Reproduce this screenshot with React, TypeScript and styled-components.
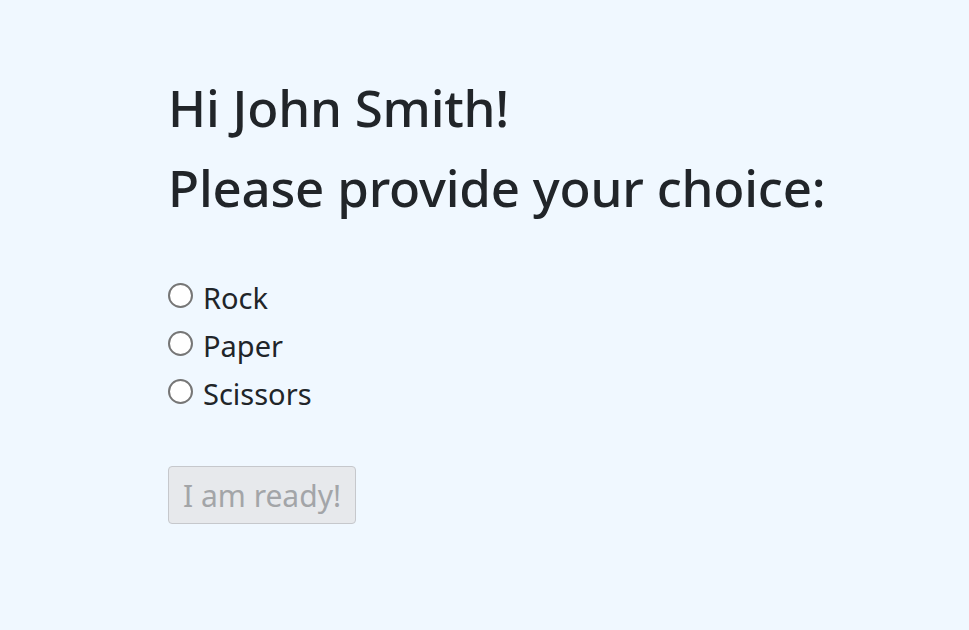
import styled, { createGlobalStyle } from "styled-components";

const GlobalStyle = createGlobalStyle`
  html, body {
    margin: 0;
    padding: 0;
    background: #f0f8ff;
  }
  body {
    font-family: "Noto Sans", "Open Sans", sans-serif;
    color: #212529;
  }
`

const Page = styled.main`
  min-height: 100vh;
  padding: 67px 0 0 168px;
  box-sizing: border-box;
`
const Heading = styled.h1`
  margin: 0;
  font-size: 51px;
  font-weight: 500;
  line-height: 80px;
  letter-spacing: -0.2px;
`
const Choices = styled.div`
  display: flex;
  flex-direction: column;
  margin-top: 46px;
`
const Choice = styled.label`
  display: flex;
  align-items: center;
  gap: 10px;
  height: 48px;
  font-size: 29px;
  cursor: pointer;
`
const Radio = styled.input.attrs({ type: "radio" })`
  appearance: none;
  margin: 0;
  width: 25px;
  height: 25px;
  border: 2px solid #767676;
  border-radius: 50%;
  background: #fff;
  box-sizing: border-box;
  position: relative;
  top: -2px;
`
const ReadyButton = styled.button`
  margin-top: 49px;
  height: 58px;
  padding: 0 14px;
  font-family: inherit;
  font-size: 30px;
  color: #a3a5a8;
  background: #e7e9ec;
  border: 1.5px solid #c6c8cc;
  border-radius: 4px;
`

const options = ["Rock", "Paper", "Scissors"]

const App = () => (
    <Page>
        <GlobalStyle />
        <Heading>Hi John Smith!</Heading>
        <Heading>Please provide your choice:</Heading>
        <Choices>
            {options.map(option => (
                <Choice key={option}>
                    <Radio name="choice" value={option} />
                    {option}
                </Choice>
            ))}
        </Choices>
        <ReadyButton disabled>I am ready!</ReadyButton>
    </Page>
)

export default App;
